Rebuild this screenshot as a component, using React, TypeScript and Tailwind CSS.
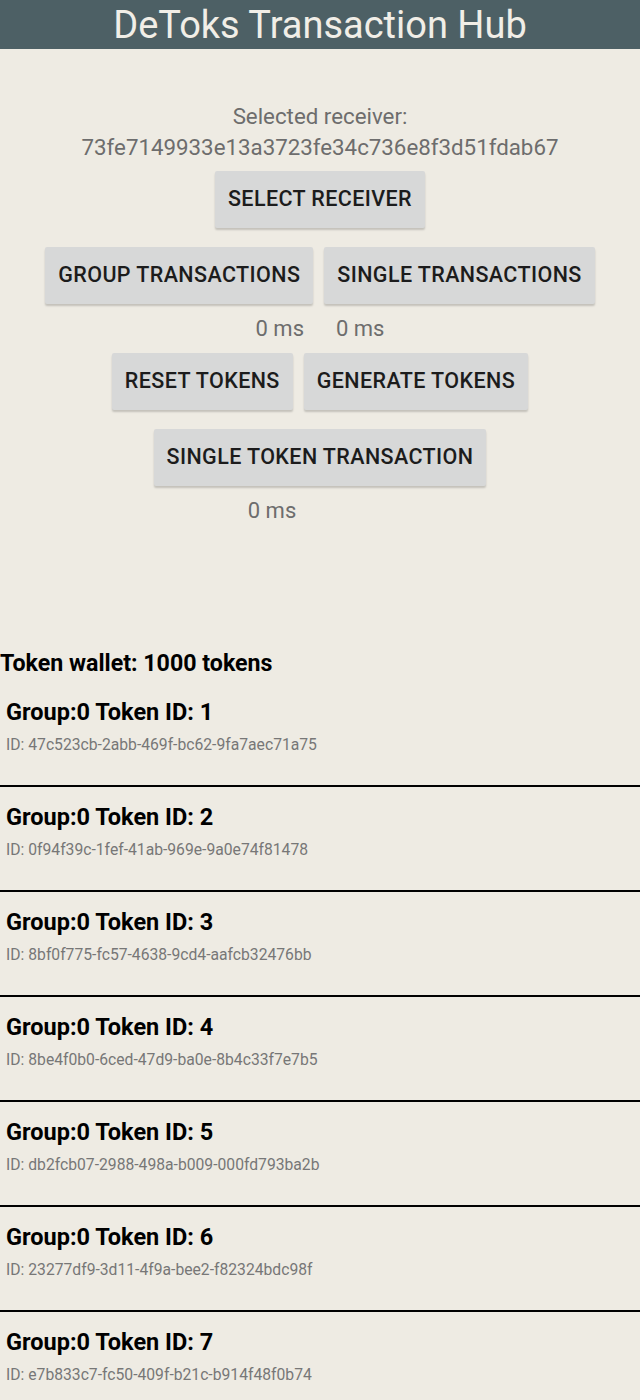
import React from "react";

const tokens = [
  { n: 1, id: "47c523cb-2abb-469f-bc62-9fa7aec71a75" },
  { n: 2, id: "0f94f39c-1fef-41ab-969e-9a0e74f81478" },
  { n: 3, id: "8bf0f775-fc57-4638-9cd4-aafcb32476bb" },
  { n: 4, id: "8be4f0b0-6ced-47d9-ba0e-8b4c33f7e7b5" },
  { n: 5, id: "db2fcb07-2988-498a-b009-000fd793ba2b" },
  { n: 6, id: "23277df9-3d11-4f9a-bee2-f82324bdc98f" },
  { n: 7, id: "e7b833c7-fc50-409f-b21c-b914f48f0b74" },
];

function Btn({ label }: { label: string }) {
  return (
    <button className="h-[57px] px-[13px] bg-[#d7d8d8] rounded-[2px] text-[21.5px] font-medium text-[#1c1c1c] tracking-[0.4px] shadow-[0_2px_2px_rgba(0,0,0,0.18)]">
      {label}
    </button>
  );
}

function TokenRow({ n, id, first }: { n: number; id: string; first: boolean }) {
  return (
    <div className={`${first ? "" : "border-t-2 border-black"} px-[6px] pt-[15px] pb-[30px]`}>
      <div className="text-[23.5px] leading-[30px] font-bold text-black">
        Group:0 Token ID: {n}
      </div>
      <div className="mt-[8px] text-[15.7px] leading-[20px] text-[#777]">ID: {id}</div>
    </div>
  );
}

export default function App() {
  return (
    <div
      className="min-h-[1400px] bg-[#eeebe3] w-[640px]"
      style={{ fontFamily: "Roboto, 'Noto Sans', sans-serif" }}
    >
      <div className="h-[49px] bg-[#4d6065] flex items-center justify-center">
        <h1 className="text-[38px] leading-[49px] pt-[2px] text-[#f1eee7]">DeToks Transaction Hub</h1>
      </div>

      <div className="flex flex-col items-center pt-[52px]">
        <div className="text-[22.3px] leading-[31px] text-[#6d6d6d] text-center">
          Selected receiver:
          <br />
          73fe7149933e13a3723fe34c736e8f3d51fdab67
        </div>
        <div className="mt-[8px]">
          <Btn label="SELECT RECEIVER" />
        </div>
        <div className="mt-[19px] flex gap-[11px]">
          <Btn label="GROUP TRANSACTIONS" />
          <Btn label="SINGLE TRANSACTIONS" />
        </div>
        <div className="mt-[10px] flex gap-[32px] text-[22px] leading-[30px] text-[#6d6d6d]">
          <span>0 ms</span>
          <span>0 ms</span>
        </div>
        <div className="mt-[9px] flex gap-[11px]">
          <Btn label="RESET TOKENS" />
          <Btn label="GENERATE TOKENS" />
        </div>
        <div className="mt-[19px]">
          <Btn label="SINGLE TOKEN TRANSACTION" />
        </div>
        <div className="mt-[10px] mr-[96px] text-[22px] leading-[30px] text-[#6d6d6d]">0 ms</div>
      </div>

      <div className="mt-[122px]">
        <div className="text-[23.2px] leading-[30px] font-bold text-black">
          Token wallet: 1000 tokens
        </div>
        <div className="mt-[4px]">
          {tokens.map((t, i) => (
            <TokenRow key={t.n} n={t.n} id={t.id} first={i === 0} />
          ))}
        </div>
      </div>
    </div>
  );
}
